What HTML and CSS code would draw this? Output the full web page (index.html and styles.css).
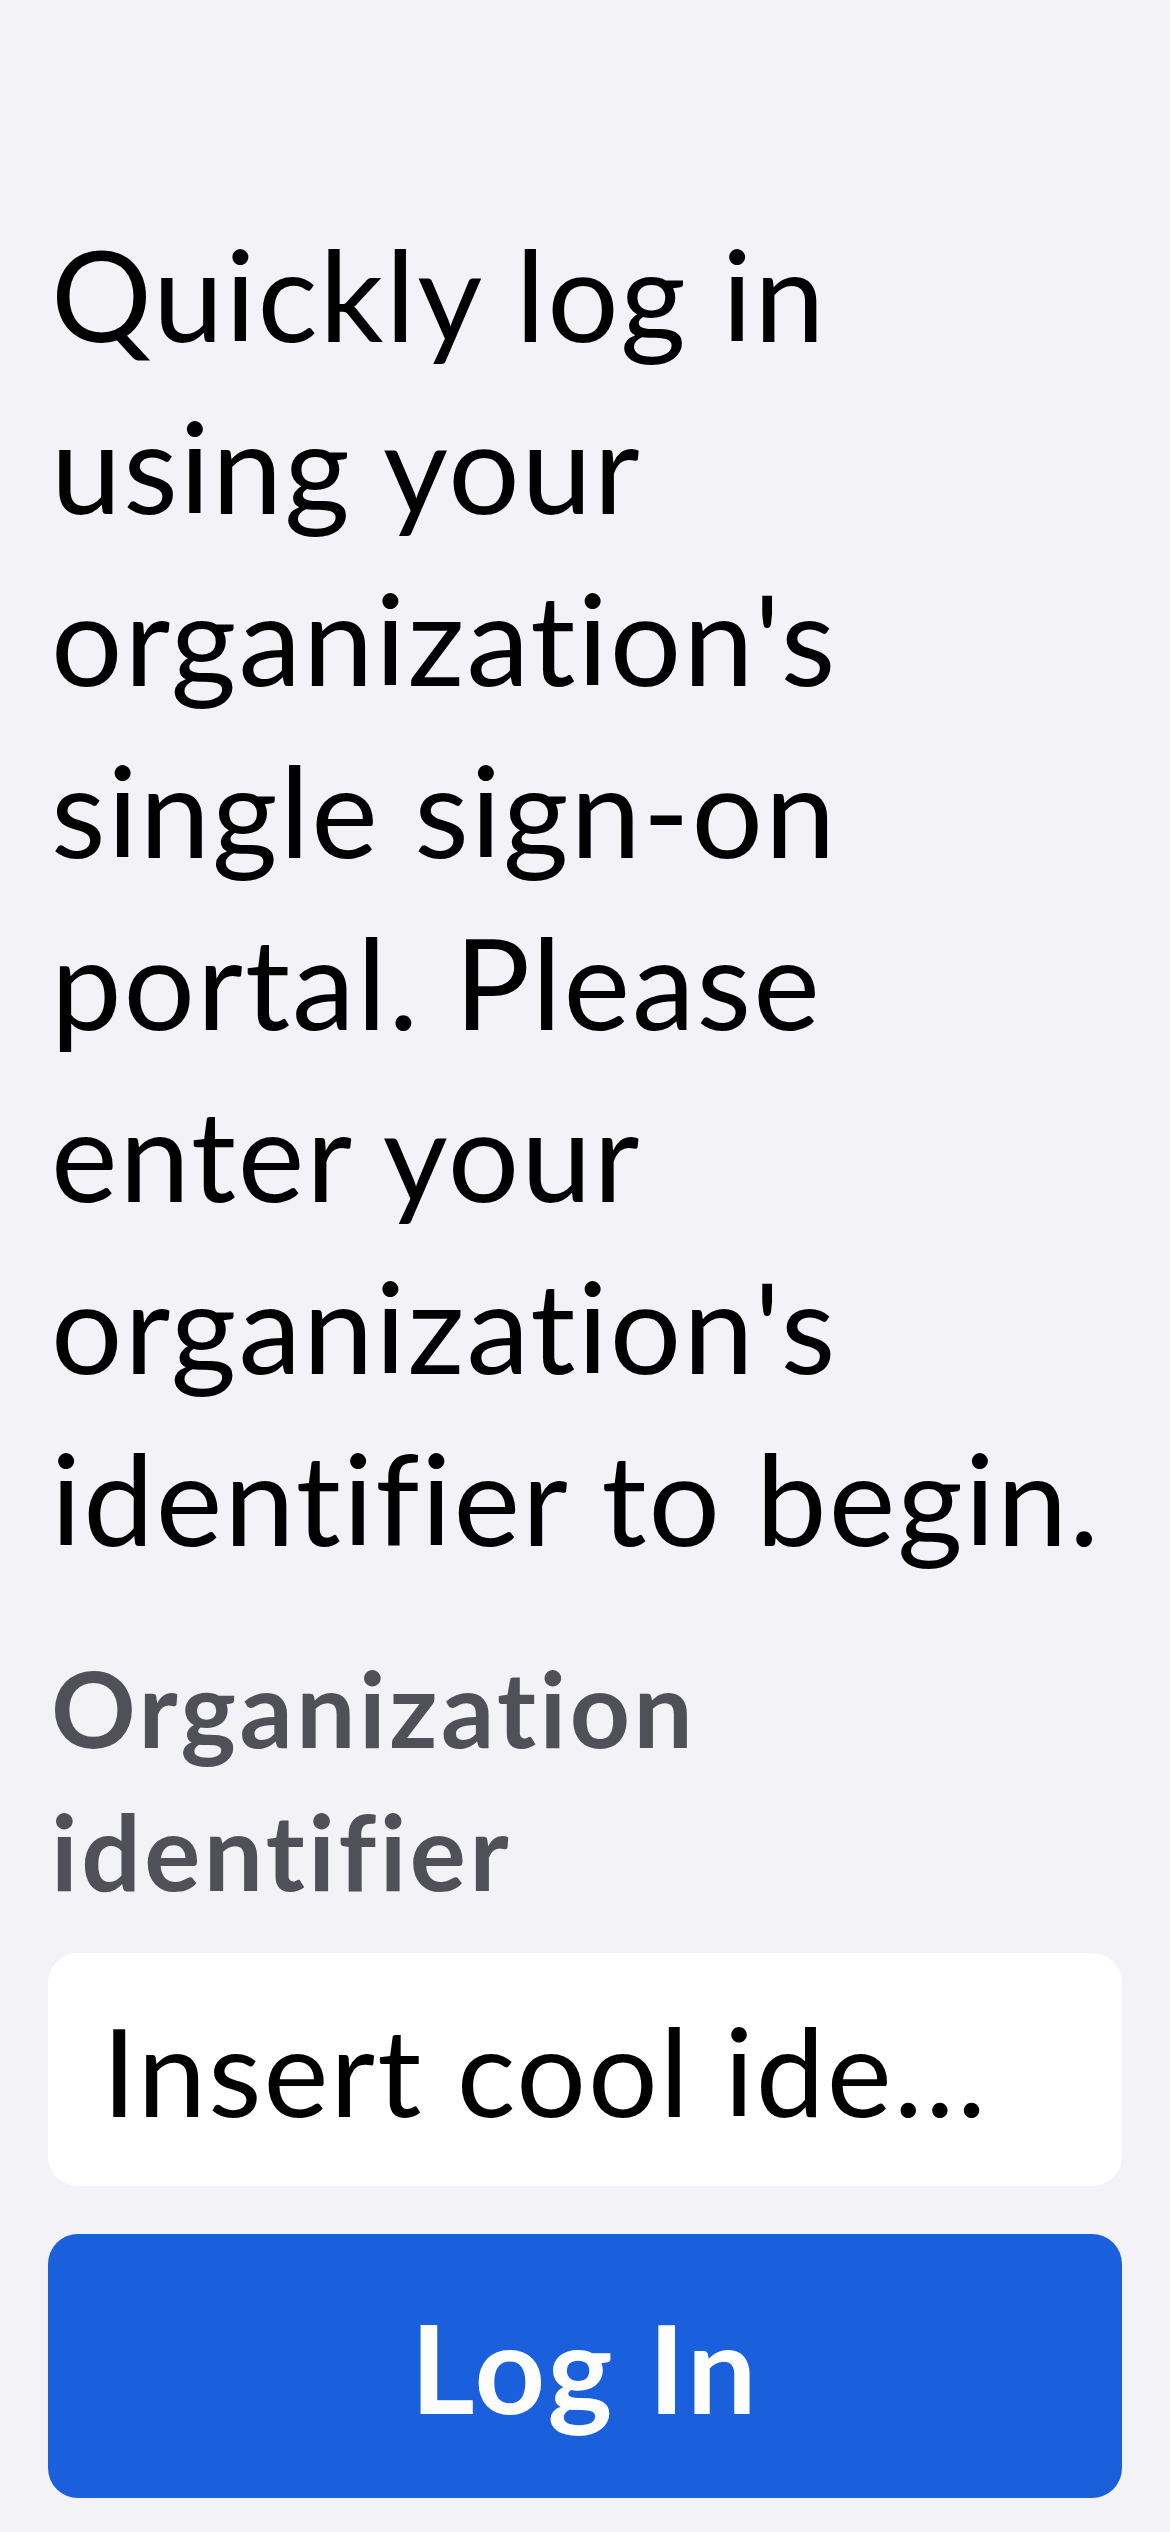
FILE: index.html
```html
<!DOCTYPE html>
<html lang="en">
<head>
<meta charset="utf-8">
<meta name="viewport" content="width=1170">
<title>Log in with SSO</title>
<link rel="stylesheet" href="styles.css">
</head>
<body>
<main class="page">
  <p class="intro">Quickly log in using your organization's single sign-on portal. Please enter your organization's identifier to begin.</p>
  <label class="field-label" for="org-id">Organization identifier</label>
  <input class="field-input" id="org-id" type="text" placeholder="Insert cool identifier">
  <button class="login-btn" type="button">Log In</button>
</main>
</body>
</html>
```
FILE: styles.css
```css
html, body {
  margin: 0;
  padding: 0;
  background: #f2f2f7;
}
body {
  font-family: Lato, "Noto Sans", sans-serif;
  color: #000;
}
.page {
  display: flex;
  flex-direction: column;
  padding: 208px 48px 0 48px;
}
.intro {
  margin: 0;
  font-size: 126px;
  line-height: 172px;
  font-weight: 400;
  letter-spacing: 2px;
  padding-left: 3px;
}
.field-label {
  margin-top: 52px;
  font-size: 105px;
  line-height: 143px;
  font-weight: 700;
  letter-spacing: 3.5px;
  color: #505058;
  padding-left: 3px;
}
.field-input {
  margin-top: 31px;
  box-sizing: border-box;
  height: 233px;
  width: 100%;
  border: none;
  outline: none;
  border-radius: 30px;
  background: #fff;
  padding: 0 100px 0 54px;
  font-family: Lato, "Noto Sans", sans-serif;
  font-size: 123px;
  letter-spacing: 2px;
  color: #000;
  text-overflow: ellipsis;
}
.field-input::placeholder {
  color: #000;
  opacity: 1;
}
.login-btn {
  margin-top: 48px;
  box-sizing: border-box;
  height: 264px;
  width: 100%;
  border: none;
  border-radius: 30px;
  background: #1a5fdc;
  color: #fff;
  font-family: Lato, "Noto Sans", sans-serif;
  font-size: 123px;
  font-weight: 700;
  letter-spacing: 3px;
}
```
